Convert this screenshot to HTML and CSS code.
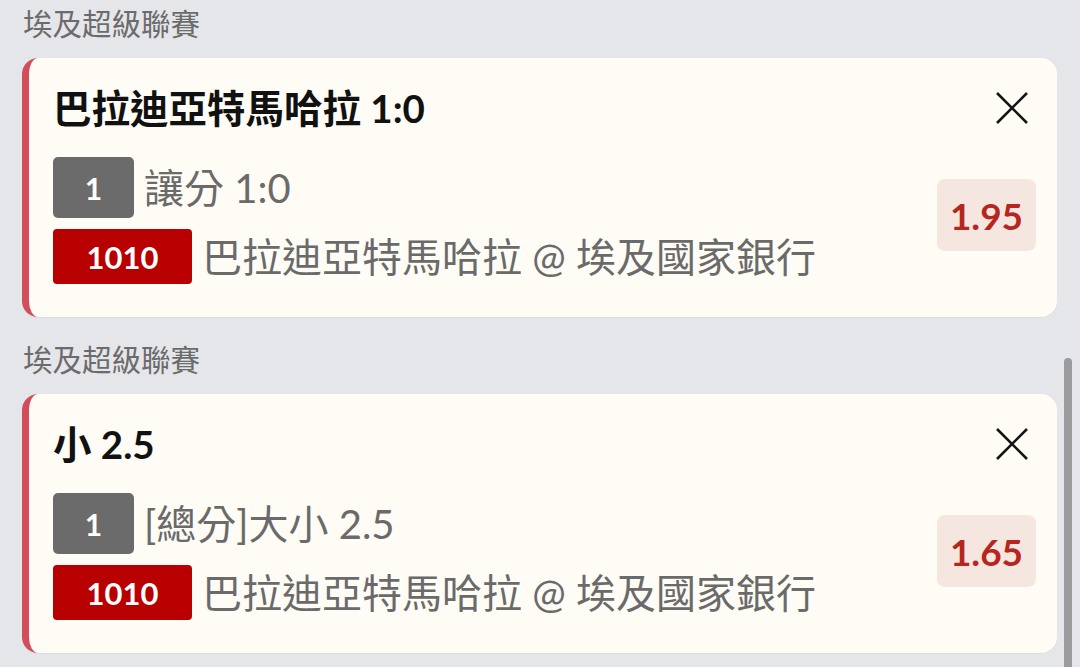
FILE: index.html
```html
<!DOCTYPE html>
<html lang="zh-Hant">
<head>
    <meta charset="UTF-8">
    <meta name="viewport" content="width=device-width, initial-scale=1.0">
    <title>投注單</title>
    <link rel="stylesheet" href="styles.css">
</head>
<body>
    <div class="slips">
        <section class="group">
            <h2 class="league">埃及超級聯賽</h2>
            <div class="slip">
                <div class="slip-head">
                    <h3 class="selection">巴拉迪亞特馬哈拉 1:0</h3>
                    <button class="remove" aria-label="移除">
                        <svg viewBox="0 0 34 32" width="34" height="32"><path d="M2 1 L32 31 M32 1 L2 31" /></svg>
                    </button>
                </div>
                <div class="slip-body">
                    <div class="lines">
                        <div class="line"><span class="tag tag-leg">1</span><span class="line-text">讓分 1:0</span></div>
                        <div class="line"><span class="tag tag-match">1010</span><span class="line-text">巴拉迪亞特馬哈拉 @ 埃及國家銀行</span></div>
                    </div>
                    <div class="odds">1.95</div>
                </div>
            </div>
        </section>

        <section class="group">
            <h2 class="league">埃及超級聯賽</h2>
            <div class="slip">
                <div class="slip-head">
                    <h3 class="selection">小 2.5</h3>
                    <button class="remove" aria-label="移除">
                        <svg viewBox="0 0 34 32" width="34" height="32"><path d="M2 1 L32 31 M32 1 L2 31" /></svg>
                    </button>
                </div>
                <div class="slip-body">
                    <div class="lines">
                        <div class="line"><span class="tag tag-leg">1</span><span class="line-text">[總分]大小 2.5</span></div>
                        <div class="line"><span class="tag tag-match">1010</span><span class="line-text">巴拉迪亞特馬哈拉 @ 埃及國家銀行</span></div>
                    </div>
                    <div class="odds">1.65</div>
                </div>
            </div>
        </section>
    </div>

    <div class="scroll-thumb"></div>
</body>
</html>
```

FILE: styles.css
```css
html, body {
    margin: 0;
    height: 100%;
    overflow: hidden;
}
body {
    background: #e5e6e9;
    font-family: "Lato", "Noto Sans CJK TC", sans-serif;
    color: #111;
}
.slips {
    padding: 4px 23px 0 22px;
}
.group + .group {
    margin-top: 23px;
}
.league {
    margin: 0 0 14px 1px;
    font-size: 29.5px;
    font-weight: 400;
    line-height: 40px;
    color: #6b6b6b;
}
.slip {
    background: #fefcf5;
    border-left: 7px solid #d34d5b;
    border-radius: 16px;
    padding: 28px 21px 33px 24px;
    box-shadow: 0 1px 1px rgba(0, 0, 0, 0.04);
}
.slip-head {
    display: flex;
    align-items: center;
    justify-content: space-between;
    height: 44px;
}
.selection {
    margin: 0;
    font-size: 38.5px;
    font-weight: 700;
    line-height: 44px;
}
.remove {
    background: none;
    border: none;
    padding: 0;
    margin-right: 7px;
    width: 34px;
    height: 32px;
    cursor: pointer;
}
.remove svg {
    display: block;
}
.remove path {
    stroke: #151515;
    stroke-width: 2.6;
    fill: none;
}
.slip-body {
    display: flex;
    justify-content: space-between;
    align-items: flex-start;
    margin-top: 27px;
}
.lines {
    display: flex;
    flex-direction: column;
    gap: 11px;
}
.line {
    display: flex;
    align-items: center;
    gap: 10px;
}
.tag {
    display: flex;
    align-items: center;
    justify-content: center;
    color: #fff;
    font-weight: 700;
}
.tag-leg {
    width: 81px;
    height: 61px;
    border-radius: 5px;
    background: #6b6b6b;
    font-size: 30px;
}
.tag-match {
    width: 139px;
    height: 55px;
    border-radius: 4px;
    background: #b80000;
    font-size: 31px;
}
.line-text {
    font-size: 40px;
    line-height: 1;
    color: #6a6a6a;
}
.odds {
    margin-top: 22px;
    width: 99px;
    height: 72px;
    border-radius: 8px;
    background: #f6e6e0;
    color: #b5261f;
    font-size: 37px;
    font-weight: 700;
    display: flex;
    align-items: center;
    justify-content: center;
}
.scroll-thumb {
    position: fixed;
    right: 8px;
    top: 358px;
    bottom: 0;
    width: 8px;
    border-radius: 4px 4px 0 0;
    background: #9b9b9d;
}
```
